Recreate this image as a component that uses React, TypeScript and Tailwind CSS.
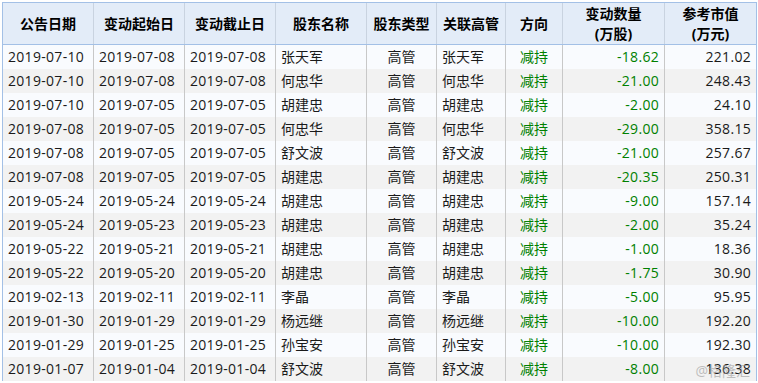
// Shareholder trade table (高管持股变动)

const cols = 'grid grid-cols-[91px_91px_91px_91px_70px_69px_57px_102px_91px]'

const rows: [string, string, string, string, string, string, string][] = [
  ['2019-07-10', '2019-07-08', '2019-07-08', '张天军', '张天军', '-18.62', '221.02'],
  ['2019-07-10', '2019-07-08', '2019-07-08', '何忠华', '何忠华', '-21.00', '248.43'],
  ['2019-07-10', '2019-07-05', '2019-07-05', '胡建忠', '胡建忠', '-2.00', '24.10'],
  ['2019-07-08', '2019-07-05', '2019-07-05', '何忠华', '何忠华', '-29.00', '358.15'],
  ['2019-07-08', '2019-07-05', '2019-07-05', '舒文波', '舒文波', '-21.00', '257.67'],
  ['2019-07-08', '2019-07-05', '2019-07-05', '胡建忠', '胡建忠', '-20.35', '250.31'],
  ['2019-05-24', '2019-05-24', '2019-05-24', '胡建忠', '胡建忠', '-9.00', '157.14'],
  ['2019-05-24', '2019-05-23', '2019-05-23', '胡建忠', '胡建忠', '-2.00', '35.24'],
  ['2019-05-22', '2019-05-21', '2019-05-21', '胡建忠', '胡建忠', '-1.00', '18.36'],
  ['2019-05-22', '2019-05-20', '2019-05-20', '胡建忠', '胡建忠', '-1.75', '30.90'],
  ['2019-02-13', '2019-02-11', '2019-02-11', '李晶', '李晶', '-5.00', '95.95'],
  ['2019-01-30', '2019-01-29', '2019-01-29', '杨远继', '杨远继', '-10.00', '192.20'],
  ['2019-01-29', '2019-01-25', '2019-01-25', '孙宝安', '孙宝安', '-10.00', '192.30'],
  ['2019-01-07', '2019-01-04', '2019-01-04', '舒文波', '舒文波', '-8.00', '136.38'],
]

function Th({ children, last }: { children: React.ReactNode; last?: boolean }) {
  return (
    <div
      className={`flex flex-col items-center justify-center font-bold leading-[20px] text-black ${
        last ? '' : 'border-r border-[#c9d3e0]'
      }`}
    >
      {children}
    </div>
  )
}

export default function App() {
  return (
    <div
      className="w-[758px] h-[383px] overflow-hidden bg-white pl-[2px] pt-[2px] text-[14px] text-[#1a1a1a]"
      style={{ fontFamily: '"Open Sans", "Noto Sans CJK SC", sans-serif' }}
    >
      <div className="relative w-[755px] border border-[#a3c0e6] border-b-0">
        <div className={`${cols} h-[42px] bg-[#e3ecf8] border-b border-[#a3c0e6]`}>
          <Th>公告日期</Th>
          <Th>变动起始日</Th>
          <Th>变动截止日</Th>
          <Th>股东名称</Th>
          <Th>股东类型</Th>
          <Th>关联高管</Th>
          <Th>方向</Th>
          <Th>
            <span>变动数量</span>
            <span>(万股)</span>
          </Th>
          <Th last>
            <span>参考市值</span>
            <span>(万元)</span>
          </Th>
        </div>
        {rows.map((r, i) => (
          <div
            key={i}
            className={`${cols} h-[24px] leading-[24px] ${i % 2 === 0 ? 'bg-[#f9fbfe]' : 'bg-[#f2f2f2]'}`}
          >
            <div className="border-r border-[#c8c8c8] pl-[5px] tracking-[0.3px]">{r[0]}</div>
            <div className="border-r border-[#c8c8c8] pl-[5px] tracking-[0.3px]">{r[1]}</div>
            <div className="border-r border-[#c8c8c8] pl-[5px] tracking-[0.3px]">{r[2]}</div>
            <div className="border-r border-[#c8c8c8] pl-[5px]">{r[3]}</div>
            <div className="border-r border-[#c8c8c8] text-center">高管</div>
            <div className="border-r border-[#c8c8c8] pl-[5px]">{r[4]}</div>
            <div className="border-r border-[#c8c8c8] text-center text-[#008000]">减持</div>
            <div className="border-r border-[#c8c8c8] pr-[5px] text-right tracking-[0.3px] text-[#008000]">
              {r[5]}
            </div>
            <div className="pr-[5px] text-right tracking-[0.3px]">{r[6]}</div>
          </div>
        ))}
        <span className="absolute right-[6px] bottom-[-2px] leading-[24px] text-[#9a9a9a] opacity-60">
          @格隆汇
        </span>
      </div>
    </div>
  )
}
